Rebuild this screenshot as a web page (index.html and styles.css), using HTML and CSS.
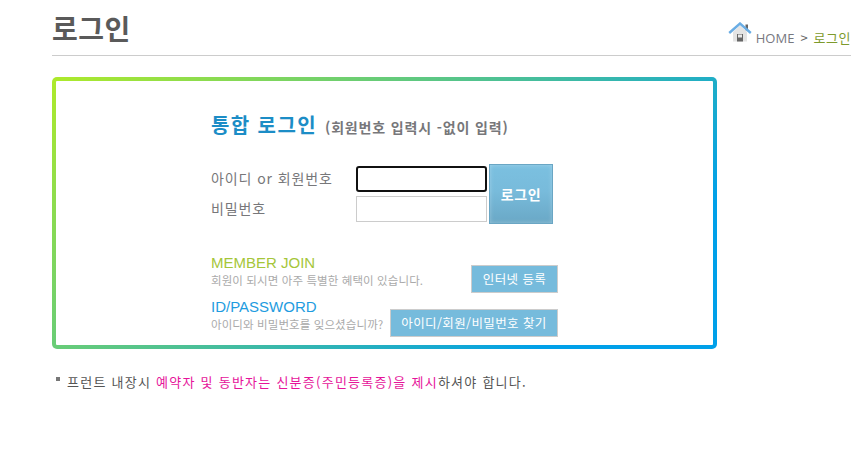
FILE: index.html
```html
<!DOCTYPE html>
<html lang="ko">
<head>
  <meta charset="UTF-8">
  <title>로그인</title>
  <link rel="stylesheet" href="styles.css">
</head>
<body>
  <div class="container">
    <!-- Title & breadcrumb -->
    <div class="page-head">
      <h1>로그인</h1>
      <div class="crumb">
        <svg class="home-icon" width="24" height="20" viewBox="0 0 24 20">
          <rect x="17.5" y="2.5" width="2.5" height="6" fill="#666"/>
          <path d="M5 10 L12 3.5 L19 10 V19.5 H5 Z" fill="#e4e4e4"/>
          <rect x="9" y="12" width="6" height="7.5" fill="#666"/>
          <rect x="10" y="12.5" width="4" height="3" fill="#e8e8e8"/>
          <path d="M1.2 11 L12 1.5 L22.8 11" fill="none" stroke="#6aade4" stroke-width="2.4"/>
        </svg>
        <span class="crumb-home">HOME</span>
        <span class="crumb-sep">&gt;</span>
        <span class="crumb-now">로그인</span>
      </div>
    </div>

    <!-- Login box -->
    <div class="login-box">
      <h2>통합 로그인 <small>(회원번호 입력시 -없이 입력)</small></h2>
      <form class="login-form">
        <div class="fields">
          <label for="user_id">아이디 or 회원번호</label>
          <input type="text" id="user_id" class="focused">
          <label for="user_pw">비밀번호</label>
          <input type="password" id="user_pw">
        </div>
        <button type="button" class="btn-login">로그인</button>
      </form>
      <div class="link-row">
        <div>
          <div class="link-title join">MEMBER JOIN</div>
          <div class="link-desc">회원이 되시면 아주 특별한 혜택이 있습니다.</div>
        </div>
        <a class="btn-link btn-join">인터넷 등록</a>
      </div>
      <div class="link-row">
        <div>
          <div class="link-title idpw">ID/PASSWORD</div>
          <div class="link-desc">아이디와 비밀번호를 잊으셨습니까?</div>
        </div>
        <a class="btn-link btn-find">아이디/회원/비밀번호 찾기</a>
      </div>
    </div>

    <p class="notice">프런트 내장시 <em>예약자 및 동반자는 신분증(주민등록증)을 제시</em>하셔야 합니다.</p>
  </div>
</body>
</html>
```

FILE: styles.css
```css
* {
  box-sizing: border-box;
  margin: 0;
  padding: 0;
}
body {
  font-family: "Noto Sans CJK KR", "Noto Sans", sans-serif;
  background: #fff;
  color: #666;
}
.container {
  width: 851px;
  padding-left: 52px;
}
/* Page head */
.page-head {
  display: flex;
  justify-content: space-between;
  align-items: flex-end;
  height: 56px;
  border-bottom: 1px solid #ccc;
}
h1 {
  font-size: 28px;
  font-weight: 700;
  letter-spacing: 0.5px;
  line-height: 30px;
  color: #5a5a5a;
  margin-bottom: 12px;
}
.crumb {
  display: flex;
  align-items: center;
  gap: 6px;
  font-size: 13px;
  line-height: 18px;
  margin-bottom: 2px;
}
.home-icon {
  margin-right: -2px;
  margin-bottom: 11px;
}
.crumb-home {
  font-family: "Open Sans", sans-serif;
  color: #77787f;
}
.crumb-now {
  color: #7d9a2c;
  letter-spacing: 0.5px;
}
/* Login box */
.login-box {
  width: 665px;
  height: 272px;
  margin-top: 21px;
  padding: 30px 0 0 155px;
  border: 4px solid transparent;
  border-radius: 5px;
  background: linear-gradient(#fff, #fff) padding-box,
    linear-gradient(140deg, #aeea2a 0%, #00a0e9 82%) border-box;
}
h2 {
  font-size: 20px;
  font-weight: 700;
  letter-spacing: 1.4px;
  line-height: 28px;
  color: #1c8dc6;
}
h2 small {
  font-size: 14px;
  letter-spacing: 0.85px;
  color: #77777a;
  margin-left: 1px;
}
.login-form {
  display: flex;
  align-items: flex-start;
  margin-top: 23px;
}
.fields {
  display: grid;
  grid-template-columns: 145px 131px;
  row-gap: 4px;
  align-items: center;
  margin-top: 2px;
}
.fields label {
  padding-bottom: 2px;
  font-size: 14px;
  letter-spacing: 0.9px;
  color: #77777a;
}
.fields input {
  height: 26px;
  border: 1px solid #ccc;
  background: #fff;
}
.fields input.focused {
  border: 2px solid #111;
  border-radius: 3px;
}
.btn-login {
  width: 64px;
  height: 60px;
  margin-left: 2px;
  border: 1px solid #6aa6c4;
  background: linear-gradient(#7bc0e0 0%, #78bbdb 45%, #6aa8c6 100%);
  box-shadow: inset 0 0 4px rgba(255, 255, 255, 0.3);
  font: inherit;
  font-size: 14px;
  font-weight: 700;
  letter-spacing: 0.6px;
  color: #fff;
}
.link-row {
  display: flex;
  justify-content: space-between;
  align-items: flex-end;
  width: 347px;
  margin-bottom: 8px;
}
.login-form + .link-row {
  margin-top: 29px;
}
.link-title {
  font-family: "Liberation Sans", sans-serif;
  font-size: 15px;
  line-height: 19px;
}
.join {
  color: #a5c63a;
}
.idpw {
  color: #1e9ce0;
}
.link-desc {
  font-size: 11.5px;
  letter-spacing: 0.1px;
  line-height: 17px;
  color: #aaa;
}
.btn-link {
  display: block;
  height: 28px;
  margin-bottom: -4px;
  border: 1px solid #ccc;
  background: #76bbdc;
  font-size: 12.5px;
  letter-spacing: 0.4px;
  line-height: 26px;
  text-align: center;
  color: #fff;
}
.btn-join {
  width: 87px;
}
.btn-find {
  width: 168px;
}
/* Notice */
.notice {
  position: relative;
  margin-top: 24px;
  padding-left: 15px;
  font-size: 13px;
  letter-spacing: 1.25px;
  line-height: 18px;
  color: #555;
}
.notice::before {
  content: "";
  position: absolute;
  left: 4px;
  top: 4px;
  width: 4px;
  height: 4px;
  background: #777;
}
.notice em {
  font-style: normal;
  color: #e6149a;
}
```
